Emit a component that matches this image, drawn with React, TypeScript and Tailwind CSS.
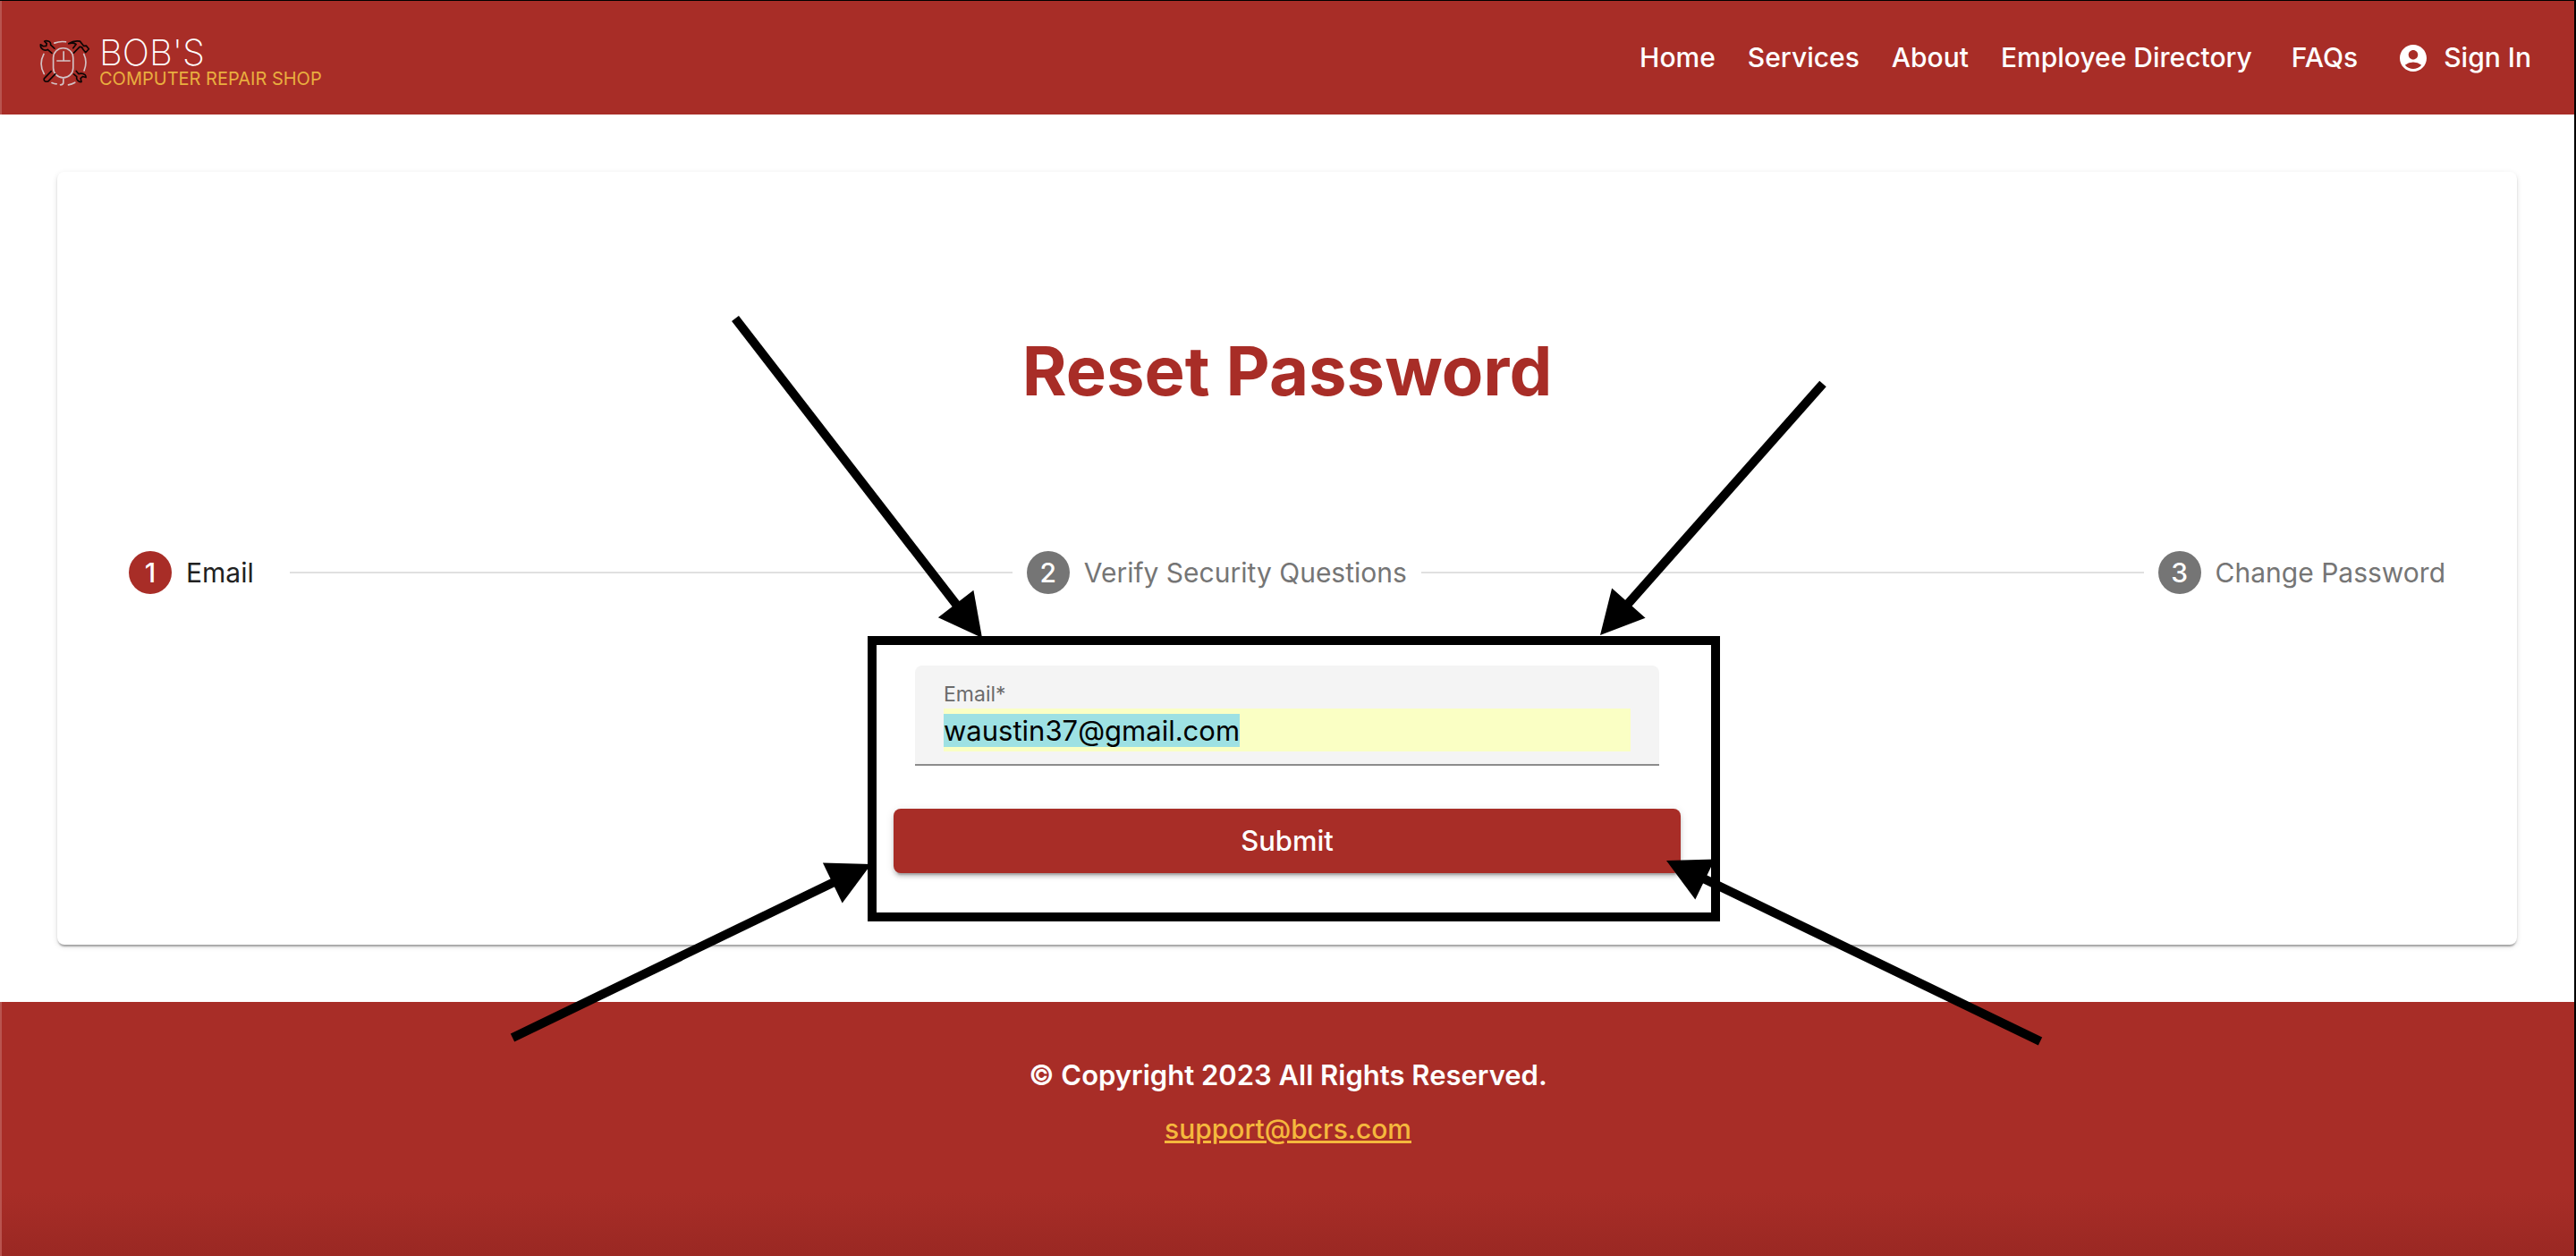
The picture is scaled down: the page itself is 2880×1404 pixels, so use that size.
import { useEffect, useRef, useState } from "react";
import { MdAccountCircle } from "react-icons/md";

const navLinks = ["Home", "Services", "About", "Employee Directory"];

function LogoMark() {
  return (
    <svg viewBox="130 130 172 162" className="h-[54px] w-[57px]" fill="none" strokeLinecap="round" strokeLinejoin="round" aria-hidden="true">
      <g stroke="#d3c3c6" strokeWidth="5">
        <rect x="177" y="162" width="67" height="100" rx="33" />
        <path d="M212 174v30M190 205h43M181 145q19-7 38-4M145 182q-18 34 1 67M280 182q13 26 1 56M172 279q8 4 16 4M211 266v12q0 8-10 8M228 286q12-2 22-8" />
      </g>
      <g stroke="#0d0505" strokeWidth="5">
        <path d="M181 163l-13-12q2-10-10-13q-8-1-11 1l8 8-2 8-10 1-9-6q-1 12 9 17q8 4 15 0l14 12" />
        <path d="M229 147q18-12 38-8l13 16 8-1 9 11-11 12-9-11q-2-9-11-8l-20 20M229 147q14-5 25 2l-10 13" />
        <path d="M170 240l-24 25q-2 9 8 10l6-1 24-25" />
        <path d="M254 239l8 10q13-4 22 3q4 5 3 9l-11-3-7 6 3 12q-10 1-15-8q-2-5-1-10l-10-8" />
      </g>
    </svg>
  );
}

function Step({ number, label, active = false }: { number: number; label: string; active?: boolean }) {
  return (
    <li className="flex shrink-0 items-center gap-4">
      <span className={`flex size-12 items-center justify-center rounded-full text-[30px] font-medium text-white ${active ? "bg-[#a82d27]" : "bg-[#757575]"}`}>
        {number}
      </span>
      <span className={`min-w-[100px] text-[30px] ${active ? "text-[#212121]" : "text-[#757575]"}`}>{label}</span>
    </li>
  );
}

function Arrow({ from, to }: { from: [number, number]; to: [number, number] }) {
  const length = Math.hypot(to[0] - from[0], to[1] - from[1]);
  const ux = (to[0] - from[0]) / length;
  const uy = (to[1] - from[1]) / length;
  const bx = to[0] - ux * 48;
  const by = to[1] - uy * 48;
  return (
    <>
      <line x1={from[0]} y1={from[1]} x2={bx + ux * 2} y2={by + uy * 2} stroke="black" strokeWidth="10" />
      <polygon points={`${to[0]},${to[1]} ${bx - uy * 25},${by + ux * 25} ${bx + uy * 25},${by - ux * 25}`} fill="black" />
    </>
  );
}

function Annotations() {
  return (
    <div className="pointer-events-none absolute -top-[404px] -left-[439px]" aria-hidden="true">
      <svg viewBox="560 340 1740 840" className="h-[840px] w-[1740px]">
        <rect x="975" y="716" width="943" height="309" fill="none" stroke="black" strokeWidth="10" />
        <Arrow from={[822, 356]} to={[1098, 713]} />
        <Arrow from={[2038, 429]} to={[1789, 710]} />
        <Arrow from={[573, 1160]} to={[974, 966]} />
        <Arrow from={[2281, 1164]} to={[1863, 962]} />
      </svg>
    </div>
  );
}

export default function App() {
  const emailRef = useRef<HTMLInputElement>(null);
  const [email, setEmail] = useState("waustin37@gmail.com");

  useEffect(() => {
    emailRef.current?.focus();
    emailRef.current?.select();
  }, []);

  return (
    <div className="flex min-h-screen flex-col overflow-hidden border-t border-r-2 border-black bg-white font-['Inter',sans-serif]">
      <header className="flex h-[127px] items-center justify-between border-l-2 border-[#b9544f] bg-[#a82d27] pr-12 pl-[42px] text-white">
        <a href="#home" className="flex items-center gap-[10px] pt-[10px]">
          <LogoMark />
          <span className="flex flex-col">
            <span className="text-[40px] leading-9 font-extralight">BOB'S</span>
            <span className="text-[20px] leading-[22px] text-[#e9ae3f]">COMPUTER REPAIR SHOP</span>
          </span>
        </a>
        <nav className="flex items-center gap-9 text-[30px] font-medium">
          {navLinks.map((link) => (
            <a key={link} href={`#${link}`}>{link}</a>
          ))}
          <a href="#faqs" className="ml-2">FAQs</a>
          <a href="#signin" className="ml-2 flex items-center gap-4">
            <MdAccountCircle className="size-9" />
            Sign In
          </a>
        </nav>
      </header>

      <main className="p-16">
        <section className="flex h-[864px] flex-col rounded-lg bg-white px-20 pt-[172px] shadow-[0_4px_2px_-2px_rgba(0,0,0,0.2),0_2px_2px_0_rgba(0,0,0,0.14),0_2px_6px_0_rgba(0,0,0,0.12)]">
          <h1 className="text-center text-[76px] leading-[100px] font-bold text-[#a82d27]">Reset Password</h1>
          <ol className="mt-[152px] flex h-12 items-center gap-4">
            <Step number={1} label="Email" active />
            <li className="h-0.5 flex-1 bg-[#e0e0e0]" aria-hidden="true" />
            <Step number={2} label="Verify Security Questions" />
            <li className="h-0.5 flex-1 bg-[#e0e0e0]" aria-hidden="true" />
            <Step number={3} label="Change Password" />
          </ol>
          <form className="relative mx-auto mt-20 flex w-[880px] flex-col" onSubmit={(e) => e.preventDefault()}>
            <div className="mx-6 flex h-28 flex-col rounded-t-lg border-b-2 border-[#8c8c8c] bg-[#f4f4f4] px-8 pt-4">
              <label htmlFor="email" className="text-[23px] leading-8 text-[#6b6b6b]">Email*</label>
              <input
                ref={emailRef}
                id="email"
                type="text"
                required
                value={email}
                onChange={(e) => setEmail(e.target.value)}
                className="h-12 w-full bg-[#faffc4] text-[31px] leading-9 text-black outline-none selection:bg-[#9ee1e3] selection:text-black"
              />
            </div>
            <button type="submit" className="mt-12 h-[72px] rounded-lg bg-[#a82d27] text-[31px] font-medium text-white shadow-[0_6px_2px_-4px_rgba(0,0,0,0.2),0_4px_4px_0_rgba(0,0,0,0.14),0_2px_10px_0_rgba(0,0,0,0.12)]">
              Submit
            </button>
            <Annotations />
          </form>
        </section>
      </main>

      <footer className="flex flex-1 flex-col items-center gap-5 border-l-2 border-[#b9544f] bg-[#a82d27] bg-linear-to-t from-[#9a2823] to-[#a82d27] to-25% pt-[62px] text-[31px] leading-10 text-white">
        <p className="font-semibold">© Copyright 2023 All Rights Reserved.</p>
        <a href="mailto:support@bcrs.com" className="text-[30px] font-medium text-[#f5b83d] underline">support@bcrs.com</a>
      </footer>
    </div>
  );
}
